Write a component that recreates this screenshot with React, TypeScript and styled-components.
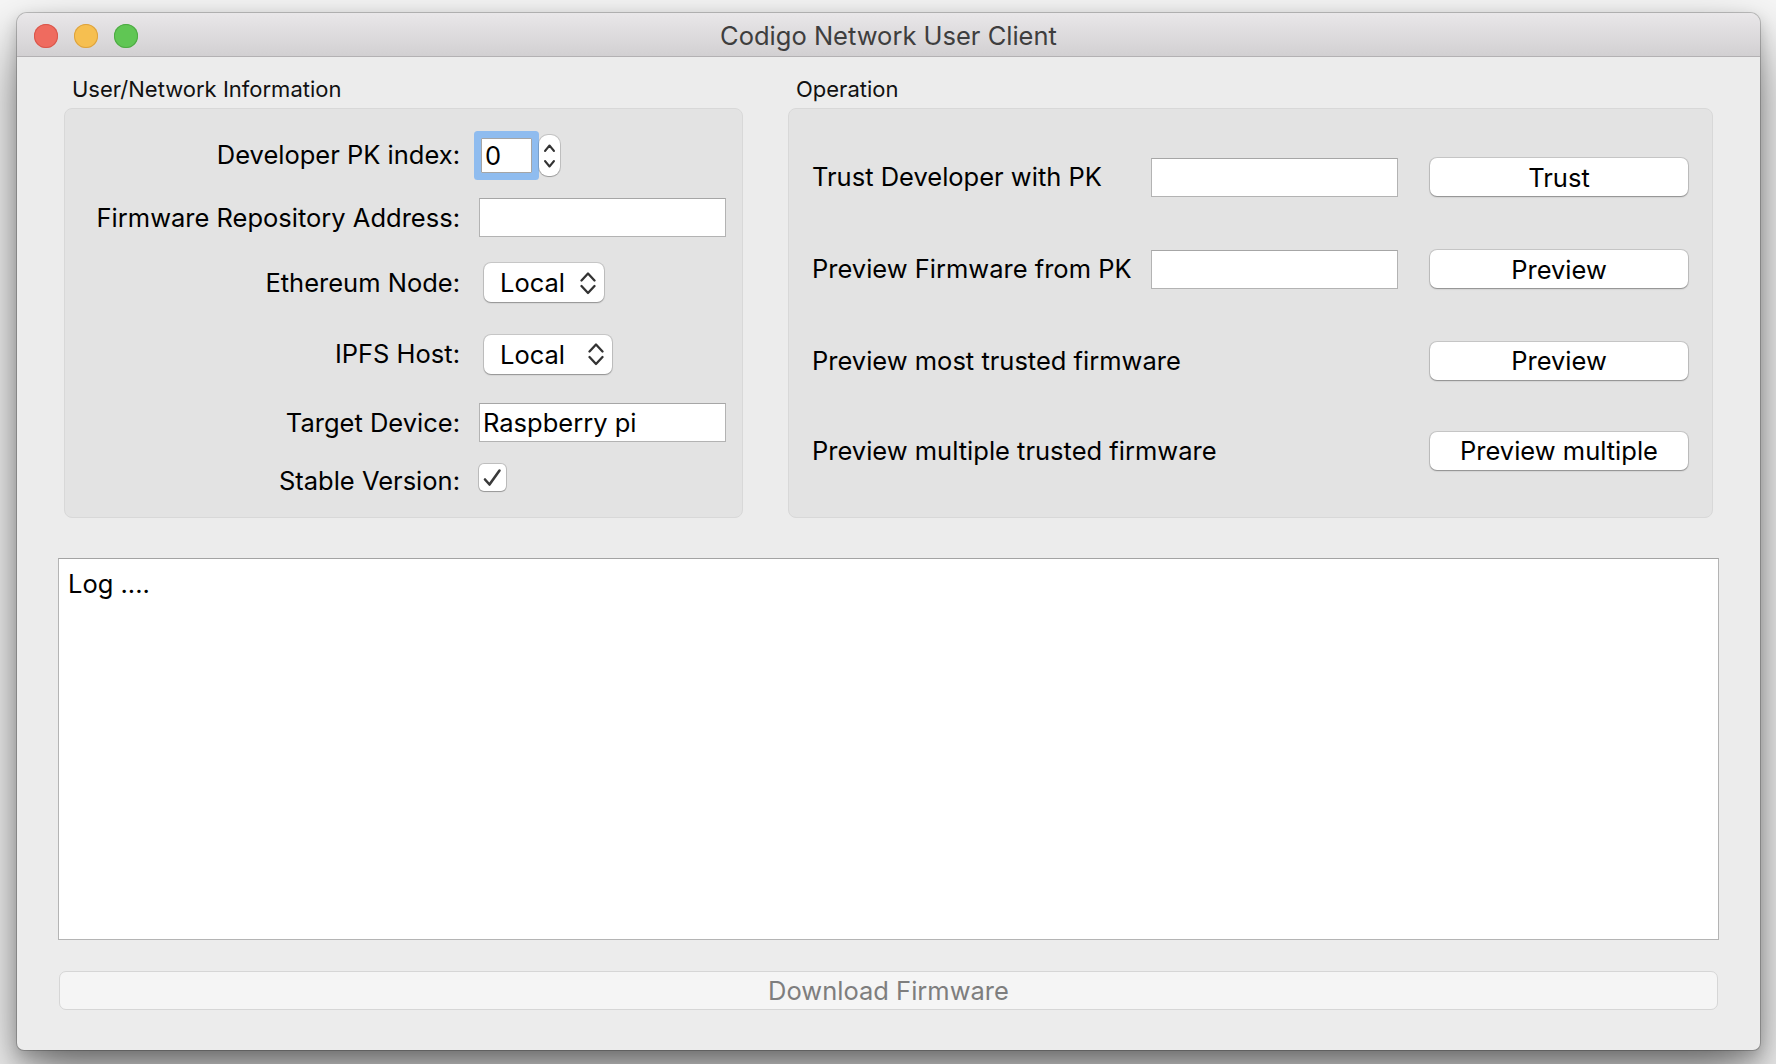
import React from 'react';
import styled, { createGlobalStyle } from 'styled-components';

const FONT = `Inter, "Liberation Sans", Arial, sans-serif`;

const GlobalStyle = createGlobalStyle`
  html, body { margin: 0; padding: 0; }
  body {
    background: #f7f7f7;
    font-family: ${FONT};
    -webkit-font-smoothing: antialiased;
  }
  #root { width: 1776px; height: 1064px; overflow: hidden; }
`;

const Stage = styled.div`
  width: 1776px;
  height: 1064px;
  box-sizing: border-box;
  padding: 13px 0 0 17px;
  overflow: hidden;
`;

const Window = styled.div`
  width: 1743px;
  height: 1037px;
  display: flex;
  flex-direction: column;
  background: #ececec;
  border-radius: 10px 10px 7px 7px;
  box-shadow: 0 0 0 1px rgba(0, 0, 0, 0.2), 0 30px 60px rgba(0, 0, 0, 0.5),
    0 6px 16px rgba(0, 0, 0, 0.2);
  overflow: hidden;
`;

const TitleBar = styled.div`
  flex: none;
  height: 44px;
  box-sizing: border-box;
  padding-top: 2px;
  display: grid;
  grid-template-columns: 1fr auto 1fr;
  align-items: center;
  background: linear-gradient(#e9e7e9, #d2d0d2);
  border-bottom: 1px solid #b3b1b3;
`;

const Lights = styled.div`
  display: flex;
  gap: 16px;
  padding-left: 17px;
`;

const Light = styled.span<{ $fill: string; $edge: string }>`
  width: 24px;
  height: 24px;
  border-radius: 50%;
  background: ${(p) => p.$fill};
  box-shadow: inset 0 0 0 1px ${(p) => p.$edge};
`;

const Title = styled.div`
  font-size: 25.5px;
  line-height: 32px;
  color: #3e3e3e;
`;

const Body = styled.div`
  flex: 1;
  display: flex;
  flex-direction: column;
  padding: 19px 41px 40px;
`;

const Groups = styled.div`
  display: grid;
  grid-template-columns: 679px 925px;
  column-gap: 45px;
  padding: 0 6px;
`;

const Group = styled.section`
  display: flex;
  flex-direction: column;
  gap: 6px;
`;

const GroupTitle = styled.div`
  font-size: 22px;
  line-height: 26px;
  padding-left: 8px;
  color: #111;
`;

const GroupBox = styled.div`
  height: 410px;
  box-sizing: border-box;
  background: #e3e3e3;
  border: 1px solid #d8d8d8;
  border-radius: 8px;
`;

const Form = styled.div<{ $top: number; $left?: number; $right?: number }>`
  display: flex;
  flex-direction: column;
  padding: ${(p) => p.$top}px ${(p) => p.$right ?? 0}px 0 ${(p) => p.$left ?? 0}px;
`;

const FormRow = styled.div<{ $h: number }>`
  height: ${(p) => p.$h}px;
  display: grid;
  grid-template-columns: 395px 1fr;
  column-gap: 19px;
  align-items: center;
`;

const OpRow = styled.div<{ $h: number }>`
  height: ${(p) => p.$h}px;
  display: grid;
  grid-template-columns: 307px 247px 258px;
  column-gap: 32px;
  align-items: center;
`;

const Label = styled.div<{ $align?: string; $drop?: number }>`
  font-size: 25.5px;
  line-height: 32px;
  color: #000;
  white-space: nowrap;
  text-align: ${(p) => p.$align ?? 'right'};
  margin-top: ${(p) => p.$drop ?? 0}px;
`;

const TextField = styled.div<{ $w?: number }>`
  width: ${(p) => p.$w ?? 247}px;
  height: 39px;
  box-sizing: border-box;
  display: flex;
  align-items: center;
  padding: 0 3px;
  background: #fff;
  border: 1px solid #b3b3b3;
  border-top-color: #a6a6a6;
  font-size: 25.5px;
  color: #000;
`;

const SpinBox = styled.div`
  display: flex;
  align-items: center;
`;

const SpinInput = styled.div`
  margin-left: 2px;
  width: 51px;
  height: 35px;
  box-sizing: border-box;
  display: flex;
  align-items: center;
  padding: 0 3px;
  background: #fff;
  border: 1px solid #a5a5a5;
  box-shadow: 0 0 0 7px #8fbcef;
  border-radius: 1px;
  font-size: 25.5px;
  color: #000;
`;

const Stepper = styled.div`
  margin-left: 7px;
  width: 21px;
  height: 41px;
  box-sizing: border-box;
  background: #fff;
  border-radius: 9px;
  box-shadow: 0 0 0 1px rgba(0, 0, 0, 0.14), 0 1px 1px rgba(0, 0, 0, 0.2);
  display: flex;
`;

const PopUp = styled.div<{ $w: number }>`
  width: ${(p) => p.$w}px;
  height: 39px;
  box-sizing: border-box;
  display: flex;
  align-items: center;
  justify-content: space-between;
  padding: 0 8px 0 16px;
  background: #fff;
  border-radius: 7px;
  box-shadow: 0 0 0 1px rgba(0, 0, 0, 0.12), 0 1px 1.5px rgba(0, 0, 0, 0.28);
  font-size: 25.5px;
  color: #000;
  margin-left: 5px;
`;

const CheckBox = styled.div`
  width: 27px;
  height: 27px;
  box-sizing: border-box;
  background: #fff;
  border-radius: 5px;
  box-shadow: 0 0 0 1px rgba(0, 0, 0, 0.16), 0 1px 1px rgba(0, 0, 0, 0.2);
  display: flex;
  align-items: center;
  justify-content: center;
`;

const PushButton = styled.div`
  height: 38px;
  box-sizing: border-box;
  display: flex;
  align-items: center;
  justify-content: center;
  background: #fff;
  border-radius: 7px;
  box-shadow: 0 0 0 1px rgba(0, 0, 0, 0.12), 0 1px 1.5px rgba(0, 0, 0, 0.3);
  font-size: 25.5px;
  color: #000;
`;

const LogArea = styled.div`
  margin-top: 40px;
  height: 382px;
  box-sizing: border-box;
  background: #fff;
  border: 1px solid #b4b4b4;
  border-top-color: #a3a3a3;
  padding: 9px 9px;
  font-size: 25.5px;
  line-height: 32px;
  color: #000;
`;

const WideButton = styled.div`
  margin: 31px 1px 0;
  height: 39px;
  box-sizing: border-box;
  display: flex;
  align-items: center;
  justify-content: center;
  background: #f5f5f5;
  border: 1px solid #d6d6d6;
  border-radius: 7px;
  font-size: 25.5px;
  color: #7e7e7e;
`;

const Chevrons = () => (
  <svg width="16" height="24" viewBox="0 0 16 24" fill="none">
    <path d="M1.5 9.5 L8 2.5 L14.5 9.5" stroke="#333" strokeWidth="2.3" strokeLinecap="round" strokeLinejoin="round" />
    <path d="M1.5 15 L8 22 L14.5 15" stroke="#333" strokeWidth="2.3" strokeLinecap="round" strokeLinejoin="round" />
  </svg>
);

const StepArrows = () => (
  <svg width="21" height="41" viewBox="0 0 21 41" fill="none">
    <path d="M6 16 L10.5 10.5 L15 16" stroke="#333" strokeWidth="2" strokeLinecap="round" strokeLinejoin="round" />
    <path d="M6 26 L10.5 31.5 L15 26" stroke="#333" strokeWidth="2" strokeLinecap="round" strokeLinejoin="round" />
  </svg>
);

const Check = () => (
  <svg width="27" height="27" viewBox="0 0 27 27" fill="none">
    <path d="M6 15.5 L10.5 20.5 L20.5 6.5" stroke="#3a3a3a" strokeWidth="2.6" strokeLinecap="round" strokeLinejoin="round" />
  </svg>
);

const opRows = [
  { label: 'Trust Developer with PK', field: true, button: 'Trust', h: 92 },
  { label: 'Preview Firmware from PK', field: true, button: 'Preview', h: 92 },
  { label: 'Preview most trusted firmware', field: false, button: 'Preview', h: 91 },
  { label: 'Preview multiple trusted firmware', field: false, button: 'Preview multiple', h: 89 },
];

export default function App() {
  return (
    <>
      <GlobalStyle />
      <Stage>
        <Window>
          <TitleBar>
            <Lights>
              <Light $fill="#ef6b5f" $edge="#d8574c" />
              <Light $fill="#f6bf50" $edge="#dca23f" />
              <Light $fill="#60c654" $edge="#4ea944" />
            </Lights>
            <Title>Codigo Network User Client</Title>
            <div />
          </TitleBar>
          <Body>
            <Groups>
              <Group>
                <GroupTitle>User/Network Information</GroupTitle>
                <GroupBox>
                  <Form $top={15}>
                    <FormRow $h={62}>
                      <Label>Developer PK index:</Label>
                      <SpinBox>
                        <SpinInput>0</SpinInput>
                        <Stepper>
                          <StepArrows />
                        </Stepper>
                      </SpinBox>
                    </FormRow>
                    <FormRow $h={63}>
                      <Label>Firmware Repository Address:</Label>
                      <TextField />
                    </FormRow>
                    <FormRow $h={67}>
                      <Label>Ethereum Node:</Label>
                      <PopUp $w={120}>
                        <span>Local</span>
                        <Chevrons />
                      </PopUp>
                    </FormRow>
                    <FormRow $h={76}>
                      <Label>IPFS Host:</Label>
                      <PopUp $w={128}>
                        <span>Local</span>
                        <Chevrons />
                      </PopUp>
                    </FormRow>
                    <FormRow $h={61}>
                      <Label>Target Device:</Label>
                      <TextField>Raspberry pi</TextField>
                    </FormRow>
                    <FormRow $h={48}>
                      <Label $drop={7}>Stable Version:</Label>
                      <CheckBox>
                        <Check />
                      </CheckBox>
                    </FormRow>
                  </Form>
                </GroupBox>
              </Group>
              <Group>
                <GroupTitle>Operation</GroupTitle>
                <GroupBox>
                  <Form $top={22} $left={23} $right={24}>
                    {opRows.map((r) => (
                      <OpRow key={r.label} $h={r.h}>
                        <Label $align="left">{r.label}</Label>
                        {r.field ? <TextField /> : <div />}
                        <PushButton>{r.button}</PushButton>
                      </OpRow>
                    ))}
                  </Form>
                </GroupBox>
              </Group>
            </Groups>
            <LogArea>Log ....</LogArea>
            <WideButton>Download Firmware</WideButton>
          </Body>
        </Window>
      </Stage>
    </>
  );
}
